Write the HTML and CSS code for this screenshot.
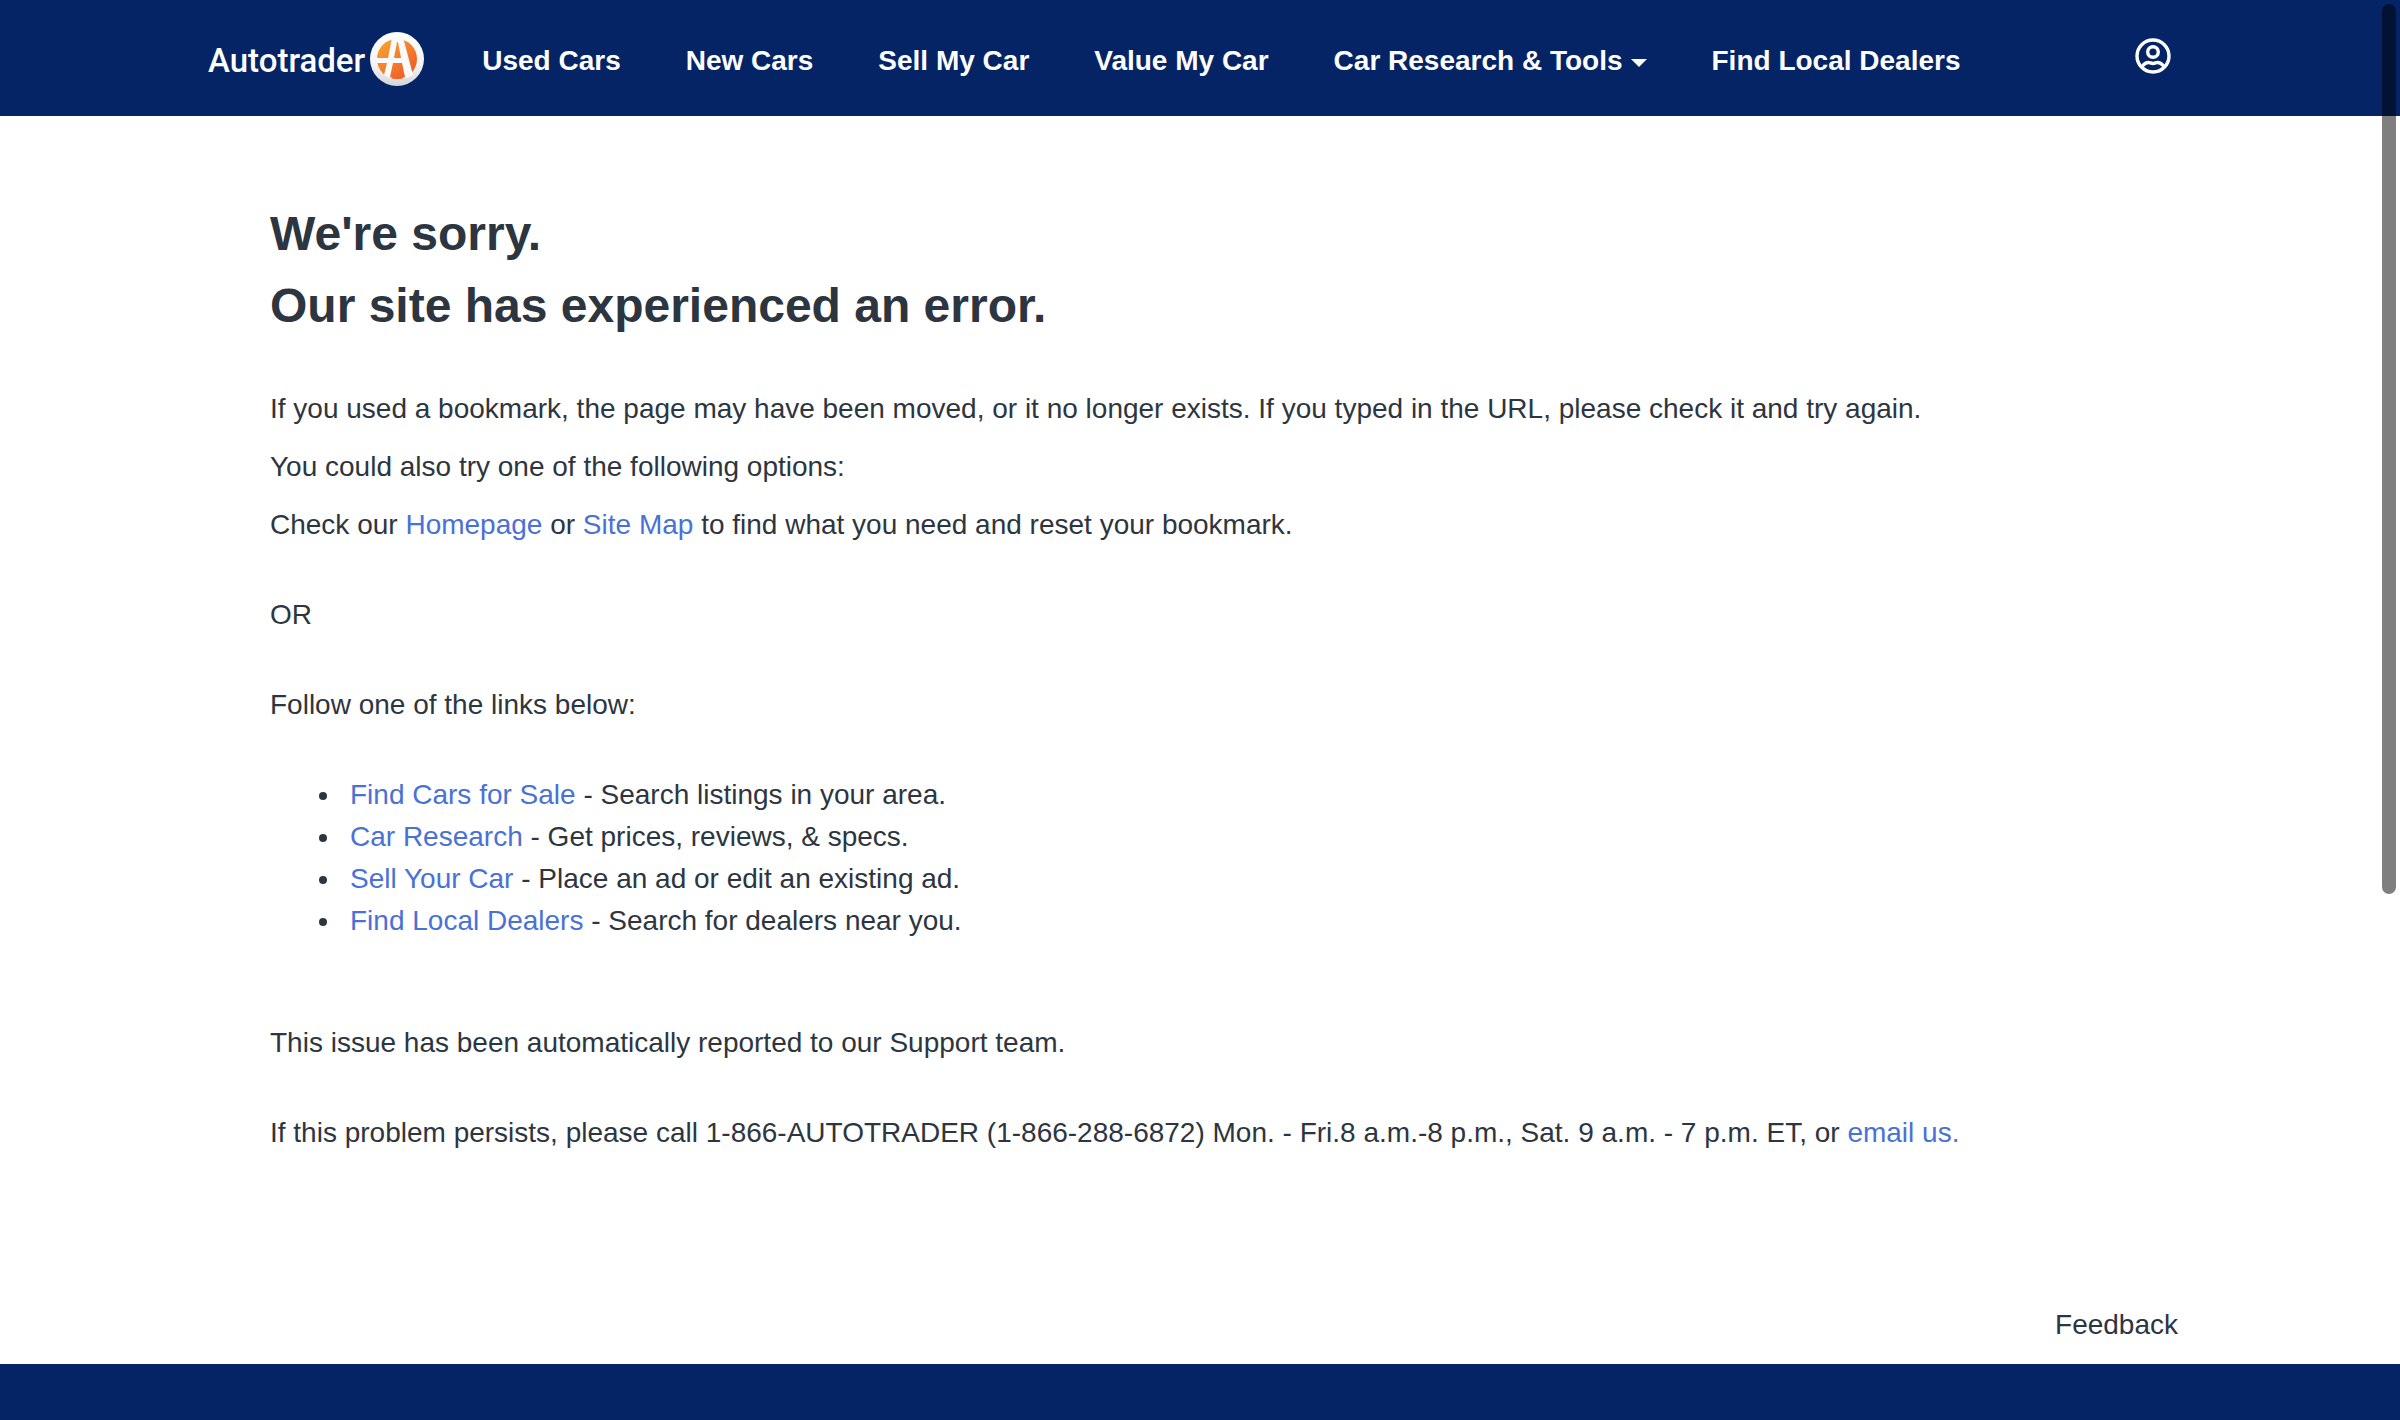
FILE: index.html
```html
<!DOCTYPE html>
<html lang="en">
<head>
<meta charset="utf-8">
<meta name="viewport" content="width=device-width, initial-scale=1">
<title>Autotrader</title>
<link rel="stylesheet" href="styles.css">
</head>
<body>
<header class="site-header">
  <div class="container header-row">
    <a class="logo" href="#">
      <span class="logo-word">Autotrader</span>
      <svg class="logo-mark" viewBox="0 0 54 54" aria-hidden="true">
        <defs>
          <linearGradient id="ring" x1="0" y1="0" x2="0" y2="1"><stop offset="0" stop-color="#fff"/><stop offset=".6" stop-color="#f4f4f5"/><stop offset="1" stop-color="#d4d5d8"/></linearGradient>
          <linearGradient id="orange" gradientUnits="userSpaceOnUse" x1="10" y1="10" x2="40" y2="46"><stop offset="0" stop-color="#fba22f"/><stop offset="1" stop-color="#ed5a29"/></linearGradient>
        </defs>
        <circle cx="27" cy="27" r="27" fill="url(#ring)"/>
        <circle cx="27" cy="27" r="20" fill="url(#orange)"/>
        <path d="M22 5H33L43 43L37 46H19L14 43L17 31H6V26H18Z" fill="#fafafa"/>
        <path d="M27 10H28L31 26H24Z" fill="url(#orange)"/>
        <path d="M23 31H32L35 45Q27 49 20 45Z" fill="url(#orange)"/>
      </svg>
    </a>
    <nav class="nav" aria-label="Main">
      <a href="#">Used Cars</a>
      <a href="#">New Cars</a>
      <a href="#">Sell My Car</a>
      <a href="#">Value My Car</a>
      <button class="nav-menu" type="button">Car Research &amp; Tools<span class="caret"></span></button>
      <a href="#">Find Local Dealers</a>
    </nav>
    <button class="account" type="button" aria-label="My account">
      <svg viewBox="0 0 36 36" fill="none" stroke="#fff" stroke-width="3.400" aria-hidden="true">
        <circle cx="18" cy="18" r="16"/>
        <circle cx="18" cy="14" r="5.300"/>
        <path d="M6.500 29Q10 24.500 13.500 24.500C15 24.500 16 25.500 18 25.500S21 24.500 22.500 24.500Q26 24.500 29.500 29"/>
      </svg>
    </button>
  </div>
</header>
<main class="container">
  <div class="content">
    <h1>We're sorry.<br>Our site has experienced an error.</h1>
    <div class="tips">
      <p>If you used a bookmark, the page may have been moved, or it no longer exists. If you typed in the URL, please check it and try again.</p>
      <p>You could also try one of the following options:</p>
      <p>Check our <a href="#">Homepage</a> or <a href="#">Site Map</a> to find what you need and reset your bookmark.</p>
    </div>
    <p>OR</p>
    <p>Follow one of the links below:</p>
    <ul class="links">
      <li><a href="#">Find Cars for Sale</a> - Search listings in your area.</li>
      <li><a href="#">Car Research</a> - Get prices, reviews, &amp; specs.</li>
      <li><a href="#">Sell Your Car</a> - Place an ad or edit an existing ad.</li>
      <li><a href="#">Find Local Dealers</a> - Search for dealers near you.</li>
    </ul>
    <p>This issue has been automatically reported to our Support team.</p>
    <p>If this problem persists, please call 1-866-AUTOTRADER (1-866-288-6872) Mon. - Fri.8 a.m.-8 p.m., Sat. 9 a.m. - 7 p.m. ET, or <a href="#">email us.</a></p>
  </div>
  <div class="feedback-row"><button class="feedback" type="button">Feedback</button></div>
</main>
<footer class="site-footer"></footer>
<div class="scroll-thumb" aria-hidden="true"></div>
</body>
</html>
```
FILE: styles.css
```css
* { box-sizing: border-box; }
body {
  margin: 0;
  min-height: 100vh;
  display: flex;
  flex-direction: column;
  background: #fff;
  color: #2d3640;
  font: 28px/42px "Liberation Sans", Arial, sans-serif;
}
a { color: #4a71d6; text-decoration: none; }
button {
  padding: 0;
  border: 0;
  background: none;
  color: inherit;
  font: inherit;
  cursor: pointer;
}
.container { width: 100%; max-width: 1984px; margin: 0 auto; }

.site-header { background: #042465; color: #fff; }
.header-row { display: flex; align-items: center; height: 116px; padding-right: 21px; }
.logo { display: flex; align-items: center; gap: 5px; padding-top: 2px; color: #fff; }
.logo-word { padding-top: 4px; font: 500 33px/40px Roboto, sans-serif; }
.logo-mark { width: 54px; height: 54px; }
.nav { display: flex; gap: 65px; margin-left: 58px; padding-top: 6px; font-weight: 700; white-space: nowrap; }
.nav a { color: #fff; }
.nav-menu { display: flex; align-items: center; gap: 8px; }
.caret { border: 8px solid transparent; border-top-color: #fff; border-bottom: 0; margin-top: 4px; }
.account { display: flex; margin-left: auto; padding-bottom: 4px; }
.account svg { width: 36px; height: 36px; }

.content { display: flex; flex-direction: column; gap: 48px; padding: 82px 62px 0; }
h1 { margin: 0 0 -2px; font-size: 48px; line-height: 72px; }
p { margin: 0; }
.tips { display: flex; flex-direction: column; gap: 16px; }
.links { margin: 0 0 32px; padding-left: 72px; }
.links li { padding-left: 8px; }
.feedback-row { display: flex; justify-content: flex-end; padding: 150px 14px 18px; }
.site-footer { flex: 1; min-height: 56px; background: #042465; }

.scroll-thumb {
  position: fixed;
  top: 4px;
  right: 4px;
  width: 14px;
  height: calc(63vh - 5px);
  border-radius: 7px;
  background: rgba(0, 0, 0, .5);
}
```
